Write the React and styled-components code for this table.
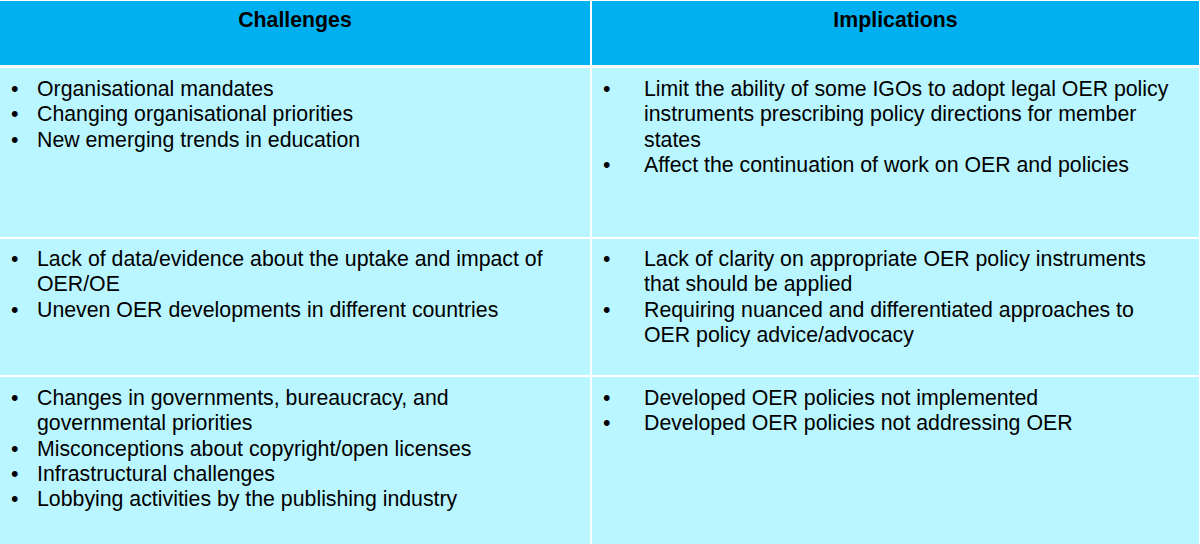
import React from "react";
import styled, { createGlobalStyle } from "styled-components";

const Global = createGlobalStyle`
  html, body { margin: 0; padding: 0; background: #ffffff; }
  body { font-family: "Liberation Sans", Arial, Helvetica, sans-serif; color: #000; }
`;

const Table = styled.div`
  display: grid;
  width: 1200px;
  height: 544px;
  box-sizing: border-box;
  padding: 1px 1px 0 0;
  background: #ffffff;
  grid-template-columns: 590px 607px;
  grid-template-rows: 65px 169px 136px 167px;
  column-gap: 2px;
  row-gap: 2px;
  overflow: hidden;
`;

const HeadCell = styled.div`
  background: #00b0f0;
  margin-bottom: 1px;
  padding-top: 7px;
  box-sizing: border-box;
  text-align: center;
  font-weight: 700;
  font-size: 21.3px;
  line-height: 25px;
`;

const Cell = styled.div`
  background: #baf6ff;
  box-sizing: border-box;
  padding: ${(p) => p.$padTop}px ${(p) => p.$padRight}px 0 11px;
`;

const List = styled.ul`
  list-style: none;
  margin: 0;
  padding: 0;
  font-size: 21.3px;
  line-height: 25.3px;
`;

const Item = styled.li`
  display: flex;
  align-items: flex-start;
`;

const Bullet = styled.span`
  flex: 0 0 ${(p) => p.$indent}px;
`;

const Text = styled.span`
  flex: 1 1 auto;
`;

const rows = [
  {
    padTop: 9,
    left: [
      "Organisational mandates",
      "Changing organisational priorities",
      "New emerging trends in education",
    ],
    right: [
      "Limit the ability of some IGOs to adopt legal OER policy instruments prescribing policy directions for member states",
      "Affect the continuation of work on OER and policies",
    ],
  },
  {
    padTop: 8,
    left: [
      "Lack of data/evidence about the uptake and impact of OER/OE",
      "Uneven OER developments in different countries",
    ],
    right: [
      "Lack of clarity on appropriate OER policy instruments that should be applied",
      "Requiring nuanced and differentiated approaches to OER policy advice/advocacy",
    ],
  },
  {
    padTop: 9,
    left: [
      "Changes in governments, bureaucracy, and governmental priorities",
      "Misconceptions about copyright/open licenses",
      "Infrastructural challenges",
      "Lobbying activities by the publishing industry",
    ],
    right: [
      "Developed OER policies not implemented",
      "Developed OER policies not addressing OER",
    ],
  },
];

function BulletList({ items, indent }) {
  return (
    <List>
      {items.map((t, i) => (
        <Item key={i}>
          <Bullet $indent={indent}>•</Bullet>
          <Text>{t}</Text>
        </Item>
      ))}
    </List>
  );
}

export default function App() {
  return (
    <>
      <Global />
      <Table>
        <HeadCell>Challenges</HeadCell>
        <HeadCell>Implications</HeadCell>
        {rows.map((r, i) => (
          <React.Fragment key={i}>
            <Cell $padTop={r.padTop} $padRight={25}>
              <BulletList items={r.left} indent={26} />
            </Cell>
            <Cell $padTop={r.padTop} $padRight={21}>
              <BulletList items={r.right} indent={41} />
            </Cell>
          </React.Fragment>
        ))}
      </Table>
    </>
  );
}
